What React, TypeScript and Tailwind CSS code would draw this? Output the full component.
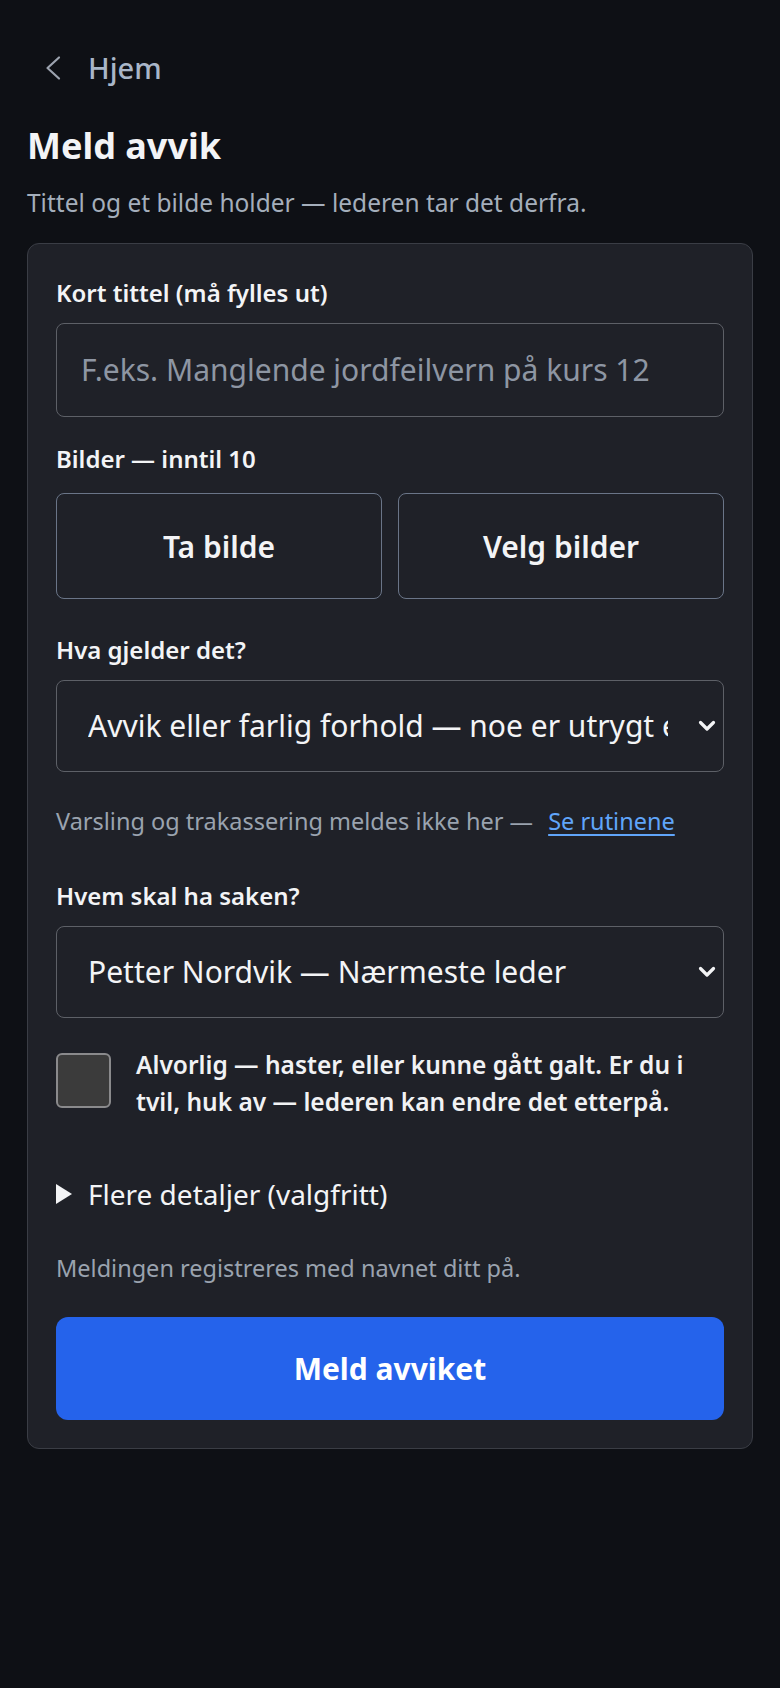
import { FC } from "react";

const font = { fontFamily: '"Noto Sans", "Liberation Sans", sans-serif' };

const ChevronLeft: FC = () => (
    <svg width="16" height="26" viewBox="0 0 16 26" fill="none" stroke="#9ca3af" strokeWidth="2.2" strokeLinecap="round" strokeLinejoin="round">
        <path d="M14 2.5 L2.5 13 L14 23.5" />
    </svg>
);

const SelectArrow: FC = () => (
    <svg width="18" height="12" viewBox="0 0 18 12" fill="none" stroke="#f3f4f6" strokeWidth="3.2" strokeLinecap="round" strokeLinejoin="round">
        <path d="M2.5 2.5 L9 9 L15.5 2.5" />
    </svg>
);

// native-looking select: value clipped before the arrow
const Select: FC<{ value: string }> = ({ value }) => (
    <div className="h-[92px] rounded-lg border border-[#5d6067] flex items-center pl-[31px] pr-[7px]">
        <div className="w-[580px] shrink-0 overflow-hidden whitespace-nowrap text-[30px] leading-[40px] text-[#f3f4f6]">
            {value}
        </div>
        <div className="ml-auto">
            <SelectArrow />
        </div>
    </div>
);

const Label: FC<{ text: string; className?: string }> = ({ text, className }) => (
    <p className={`text-[24px] leading-[32px] font-semibold text-[#f3f4f6] ${className ?? ""}`}>{text}</p>
);

const App: FC = () => (
    <div className="min-h-[1688px] w-full bg-[#0e1015] px-[27px] pt-[47px]" style={font}>
        <div className="flex items-center gap-[27px] pl-[18px] h-[42px]">
            <ChevronLeft />
            <span className="text-[29px] font-medium text-[#a9b6c8]">Hjem</span>
        </div>

        <h1 className="mt-[35px] text-[36px] leading-[44px] font-bold text-[#f3f4f6]">Meld avvik</h1>
        <p className="mt-[19px] text-[24.5px] leading-[32px] text-[#a4aebb]">
            Tittel og et bilde holder — lederen tar det derfra.
        </p>

        <div className="mt-[24px] rounded-xl border border-[#3a3d45] bg-[#1f2128] px-7 pt-7 pb-7">
            <Label text="Kort tittel (må fylles ut)" className="mt-[5px]" />
            <div className="mt-[14px] h-[94px] rounded-lg border border-[#5d6067] flex items-center px-6">
                <span className="text-[30px] leading-[40px] text-[#8e96a3]">F.eks. Manglende jordfeilvern på kurs 12</span>
            </div>

            <Label text="Bilder — inntil 10" className="mt-[26px]" />
            <div className="mt-[18px] grid grid-cols-2 gap-4">
                <button className="h-[106px] rounded-lg border border-[#6a7588] text-[30px] font-semibold text-[#f3f4f6]">
                    Ta bilde
                </button>
                <button className="h-[106px] rounded-lg border border-[#6a7588] text-[30px] font-semibold text-[#f3f4f6]">
                    Velg bilder
                </button>
            </div>

            <Label text="Hva gjelder det?" className="mt-[35px]" />
            <div className="mt-[14px]">
                <Select value="Avvik eller farlig forhold — noe er utrygt eller feil" />
            </div>

            <p className="mt-[33px] text-[23.5px] leading-[32px] text-[#9aa3af]">
                Varsling og trakassering meldes ikke her —{" "}
                <a className="ml-[9px] text-[#60a5fa] underline underline-offset-4">Se rutinene</a>
            </p>

            <Label text="Hvem skal ha saken?" className="mt-[43px]" />
            <div className="mt-[14px]">
                <Select value="Petter Nordvik — Nærmeste leder" />
            </div>

            <div className="mt-[28px] flex items-start gap-[25px]">
                <div className="mt-[7px] w-[55px] h-[55px] shrink-0 rounded-md border-2 border-[#8a8a8c] bg-[#3b3b3b]" />
                <p className="max-w-[548px] text-[24.5px] leading-[37px] font-semibold text-[#f1f2f4]">
                    Alvorlig — haster, eller kunne gått galt. Er du i tvil, huk av — lederen kan endre det etterpå.
                </p>
            </div>

            <div className="mt-[56px] flex items-center gap-4 h-[36px]">
                <svg width="16" height="20" viewBox="0 0 16 20">
                    <path d="M0 0 L16 10 L0 20 Z" fill="#f3f4f6" />
                </svg>
                <span className="text-[28px] leading-[36px] text-[#f3f4f6]">Flere detaljer (valgfritt)</span>
            </div>

            <p className="mt-[40px] text-[23.5px] leading-[32px] text-[#9aa3af]">
                Meldingen registreres med navnet ditt på.
            </p>

            <button className="mt-[33px] w-full h-[103px] rounded-xl bg-[#2563eb] text-[30px] font-bold text-white">
                Meld avviket
            </button>
        </div>
    </div>
);

export default App;
